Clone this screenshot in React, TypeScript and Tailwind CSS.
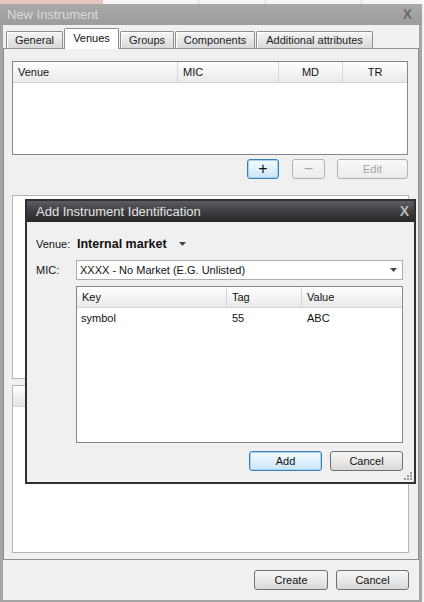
import React from 'react'

const btn =
  'h-[20px] rounded-[3px] border border-[#707070] bg-gradient-to-b from-[#f6f6f6] via-[#e9e9e9] to-[#d8d8d8] text-[11px] text-[#111] flex items-center justify-center'
const btnDefault =
  'h-[20px] rounded-[3px] border border-[#3c7fb1] bg-gradient-to-b from-[#f4fafe] via-[#e1f0fb] to-[#c9e4f7] text-[11px] text-[#111] flex items-center justify-center shadow-[inset_0_0_0_1px_#9fd5f7]'
const btnDisabled =
  'h-[20px] rounded-[3px] border border-[#adb2b5] bg-gradient-to-b from-[#f8f8f8] to-[#ececec] text-[11px] text-[#a3a3a3] flex items-center justify-center'

function Tab({ label, w, active }: { label: string; w: number; active?: boolean }) {
  if (active) {
    return (
      <div
        style={{ width: w }}
        className="relative z-10 -mb-px h-[21px] border border-b-0 border-[#8e8f8f] bg-white rounded-t-[2px] flex items-center justify-center text-[11px] text-[#111] pb-[2px]"
      >
        {label}
      </div>
    )
  }
  return (
    <div
      style={{ width: w }}
      className="h-[17px] border border-b-0 border-[#8e8f8f] bg-gradient-to-b from-[#f4f4f4] to-[#d9d9d9] rounded-t-[2px] flex items-center justify-center text-[11px] text-[#222] shadow-[inset_1px_1px_0_#fff]"
    >
      {label}
    </div>
  )
}

function HeaderCell({ children, w, align = 'left', last }: { children?: React.ReactNode; w?: number; align?: 'left' | 'center'; last?: boolean }) {
  return (
    <div
      style={w ? { width: w } : undefined}
      className={`${w ? '' : 'flex-1'} h-full flex items-center px-[5px] text-[11px] text-[#111] ${last ? '' : 'border-r border-[#d5d5d5]'} ${align === 'center' ? 'justify-center' : ''}`}
    >
      {children}
    </div>
  )
}

function Grip() {
  return (
    <svg width="10" height="10" viewBox="0 0 10 10">
      {[
        [7, 1],
        [4, 4],
        [7, 4],
        [1, 7],
        [4, 7],
        [7, 7],
      ].map(([x, y], i) => (
        <rect key={i} x={x} y={y} width="2" height="2" fill="#9a9a9a" />
      ))}
    </svg>
  )
}

function Caret() {
  return (
    <svg width="7" height="4" viewBox="0 0 7 4">
      <path d="M0 0h7L3.5 4z" fill="#444" />
    </svg>
  )
}

export default function App() {
  return (
    <div className="relative w-[424px] h-[602px] overflow-hidden bg-[#f2f2f2] font-['Liberation_Sans',Arial,sans-serif]">
      {/* app behind the window */}
      <div className="h-[4px] flex">
        <div className="w-[103px] bg-[#e9c5c1]" />
        <div className="w-[96px] bg-[#f7f7f7] border-r border-[#d8d8d8]" />
        <div className="w-[67px] bg-[#f7f7f7] border-r border-[#d8d8d8]" />
        <div className="w-[96px] bg-[#f7f7f7] border-r border-[#d8d8d8]" />
        <div className="flex-1 bg-[#f7f7f7]" />
      </div>

      {/* New Instrument window */}
      <div className="w-[422px] h-[598px] flex flex-col bg-[#a4a4a4]">
        <div className="h-[21px] flex items-center justify-between px-[7px] bg-gradient-to-b from-[#a9a9a9] to-[#9d9d9d]">
          <span className="text-[13px] text-[#dadada]">New Instrument</span>
          <span className="text-[14px] font-bold text-[#6b6b6b] mr-[3px]">X</span>
        </div>

        <div className="flex-1 mx-[3px] mb-[2px] bg-[#f0f0f0] flex flex-col">
          {/* tabs */}
          <div className="h-[23px] flex items-end gap-[1px] pl-[3px]">
            <Tab label="General" w={57} />
            <Tab label="Venues" w={55} active />
            <Tab label="Groups" w={54} />
            <Tab label="Components" w={80} />
            <Tab label="Additional attributes" w={117} />
          </div>

          <div className="h-[512px] border border-[#8e8f8f] bg-[#f0f0f0] pt-[12px] pl-[8px] pr-[10px] flex flex-col">
            {/* venues table */}
            <div className="h-[94px] border border-[#828790] bg-white flex flex-col">
              <div className="h-[21px] flex bg-gradient-to-b from-white to-[#e9e9e9] border-b border-[#d5d5d5]">
                <HeaderCell w={165}>Venue</HeaderCell>
                <HeaderCell w={101}>MIC</HeaderCell>
                <HeaderCell w={64} align="center">MD</HeaderCell>
                <HeaderCell align="center" last>TR</HeaderCell>
              </div>
            </div>

            <div className="mt-[4px] flex justify-end">
              <div className={`${btnDefault} w-[32px] text-[16px]`}>+</div>
              <div className={`${btnDisabled} w-[33px] ml-[13px] text-[16px]`}>−</div>
              <div className={`${btnDisabled} w-[71px] ml-[12px]`}>Edit</div>
            </div>

            <div className="mt-[16px] h-[184px] w-[397px] border border-[#b5b5b5] bg-white" />
            <div className="mt-[6px] h-[168px] w-[397px] border border-[#b5b5b5] bg-white">
              <div className="h-[21px] bg-gradient-to-b from-white to-[#e4e4e4] border-b border-[#d5d5d5]" />
            </div>
          </div>

          <div className="mt-[10px] flex justify-end pr-[10px]">
            <div className={`${btn} w-[74px]`}>Create</div>
            <div className={`${btn} w-[73px] ml-[8px]`}>Cancel</div>
          </div>
        </div>
      </div>

      {/* Add Instrument Identification dialog */}
      <div className="absolute left-[25px] top-[199px] w-[391px] h-[285px] border-2 border-[#2f3033] bg-[#f0f0f0] flex flex-col">
        <div className="h-[21px] flex items-center justify-between pl-[9px] pr-[5px] bg-gradient-to-b from-[#5c5e62] via-[#3d3e41] to-[#28292b]">
          <span className="text-[13px] text-[#e2e2e2]">Add Instrument Identification</span>
          <span className="text-[14px] font-bold text-[#b8b8b8]">X</span>
        </div>

        <div className="relative flex-1 pl-[9px] pr-[11px] pt-[12px] flex flex-col">
          <div className="h-[20px] flex items-center text-[11px] text-[#111]">
            <span className="w-[40px]">Venue:</span>
            <span className="font-bold text-[12.5px] ml-[1px]">Internal market</span>
            <span className="ml-[12px] flex items-center">
              <Caret />
            </span>
          </div>

          <div className="mt-[6px] h-[20px] flex items-center text-[11px] text-[#111]">
            <span className="w-[40px]">MIC:</span>
            <div className="flex-1 h-[20px] border border-[#abadb3] bg-white flex items-center justify-between pl-[3px] pr-[5px]">
              <span>XXXX - No Market (E.G. Unlisted)</span>
              <Caret />
            </div>
          </div>

          <div className="mt-[6px] ml-[40px] h-[157px] border border-[#828790] bg-white flex flex-col">
            <div className="h-[21px] flex bg-gradient-to-b from-white to-[#e9e9e9] border-b border-[#d5d5d5]">
              <HeaderCell w={150}>Key</HeaderCell>
              <HeaderCell w={75}>Tag</HeaderCell>
              <HeaderCell last>Value</HeaderCell>
            </div>
            <div className="h-[20px] flex items-center text-[11px] text-[#111]">
              <span className="w-[150px] pl-[4px]">symbol</span>
              <span className="w-[75px] pl-[5px]">55</span>
              <span className="pl-[5px]">ABC</span>
            </div>
          </div>

          <div className="mt-[8px] flex justify-end">
            <div className={`${btnDefault} w-[73px] h-[19px]`}>Add</div>
            <div className={`${btn} w-[73px] h-[19px] ml-[8px]`}>Cancel</div>
          </div>

          <div className="absolute right-[1px] bottom-[1px]">
            <Grip />
          </div>
        </div>
      </div>
    </div>
  )
}
